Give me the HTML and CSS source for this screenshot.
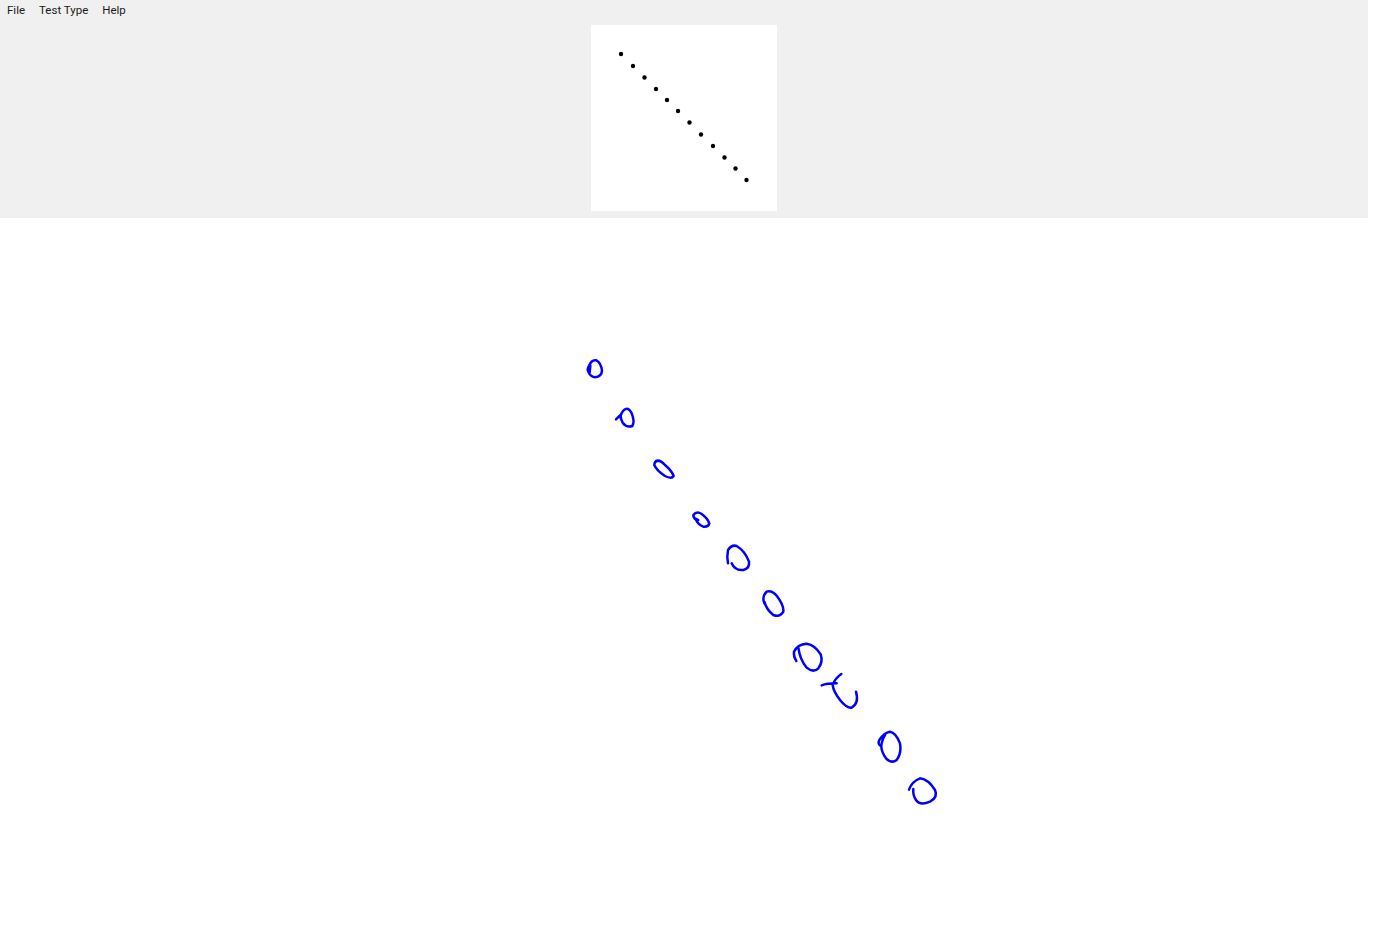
FILE: index.html
```html
<!DOCTYPE html>
<html lang="en">
<head>
<meta charset="utf-8">
<title>Test</title>
<link rel="stylesheet" href="styles.css">
</head>
<body>
<header class="panel">
  <nav class="menu">
    <span class="menu-item">File</span>
    <span class="menu-item">Test Type</span>
    <span class="menu-item">Help</span>
  </nav>
  <div class="target-wrap">
    <svg class="target" viewBox="591 25 186 186" width="186" height="186">
      <g class="dots">
        <circle cx="621" cy="54" r="2.2"/><circle cx="633" cy="66" r="2.2"/><circle cx="644.5" cy="77.5" r="2.2"/>
        <circle cx="656" cy="89" r="2.2"/><circle cx="667" cy="100" r="2.2"/><circle cx="678" cy="111" r="2.2"/>
        <circle cx="689.5" cy="122.5" r="2.2"/><circle cx="701" cy="134.5" r="2.2"/><circle cx="713" cy="146" r="2.2"/>
        <circle cx="724.5" cy="157.5" r="2.2"/><circle cx="735.5" cy="168.5" r="2.2"/><circle cx="746.5" cy="180" r="2.2"/>
      </g>
    </svg>
  </div>
</header>
<main class="ink-area">
  <svg class="ink" viewBox="0 218 1381 707" width="1381" height="707">
    <g class="strokes" transform="translate(575 350) scale(.33333)">
      <path d="M44 68Q36 56 42 47Q50 28 64 31Q78 38 81 62Q80 80 60 82Q44 80 38 60Q38 50 46 46M46 48L44 66"/>
      <path d="M123 208L134 197M137 205Q136 188 150 178Q162 172 170 190Q180 215 172 228Q155 234 143 218Q138 210 137 198"/>
      <path d="M243 333Q255 328 270 345Q290 362 296 378Q290 388 270 378Q245 362 238 345Q238 333 250 332"/>
      <path d="M365 510Q355 505 355 495Q365 482 380 492Q398 505 403 520Q400 532 385 530Q370 525 362 508M360 505L370 510"/>
    </g>
    <g class="strokes" transform="translate(720 535) scale(.33333)">
      <path d="M24 85Q20 65 24 45Q35 28 50 33Q75 48 87 80Q90 100 70 105Q45 108 35 85"/>
      <path d="M133 205Q125 185 140 170Q155 165 170 182Q192 210 190 230Q180 248 160 240Q140 225 133 200"/>
      <path d="M229 378Q220 365 222 350Q232 328 260 326Q285 330 302 358Q310 380 295 400Q280 415 260 398Q240 375 235 338"/>
      <path d="M305 451Q320 445 350 445M364 417Q345 430 338 450Q340 470 360 495Q380 520 395 518Q418 505 408 470"/>
    </g>
    <g class="strokes" transform="translate(860 720) scale(.33333)">
      <path d="M62 78Q52 72 58 60Q72 38 90 35Q108 38 120 70Q125 100 110 120Q95 132 78 115Q60 90 65 70Q68 55 75 45"/>
      <path d="M147 209Q155 185 180 175Q205 178 225 210Q235 232 210 245Q180 258 168 240Q158 225 160 207"/>
    </g>
  </svg>
</main>
</body>
</html>
```
FILE: styles.css
```css
html, body {
  margin: 0;
  padding: 0;
  background: #fff;
  overflow: hidden;
}
body {
  font-family: Roboto, "Open Sans", sans-serif;
}
.panel {
  width: 1368px;
  height: 218px;
  background: #f0f0f0;
  display: flex;
  flex-direction: column;
}
.menu {
  display: flex;
  height: 19px;
  margin-bottom: 6px;
  padding-left: 7px;
  gap: 14px;
  align-items: center;
  font-size: 11.5px;
  color: #1a1a1a;
}
.target-wrap {
  display: flex;
  justify-content: center;
}
.target {
  display: block;
  background: #fff;
}
.dots {
  fill: #000;
}
.ink-area {
  height: 707px;
}
.ink {
  display: block;
}
.strokes path {
  fill: none;
  stroke: #0000ff;
  stroke-width: 7.5;
  stroke-linecap: round;
  stroke-linejoin: round;
}
```
